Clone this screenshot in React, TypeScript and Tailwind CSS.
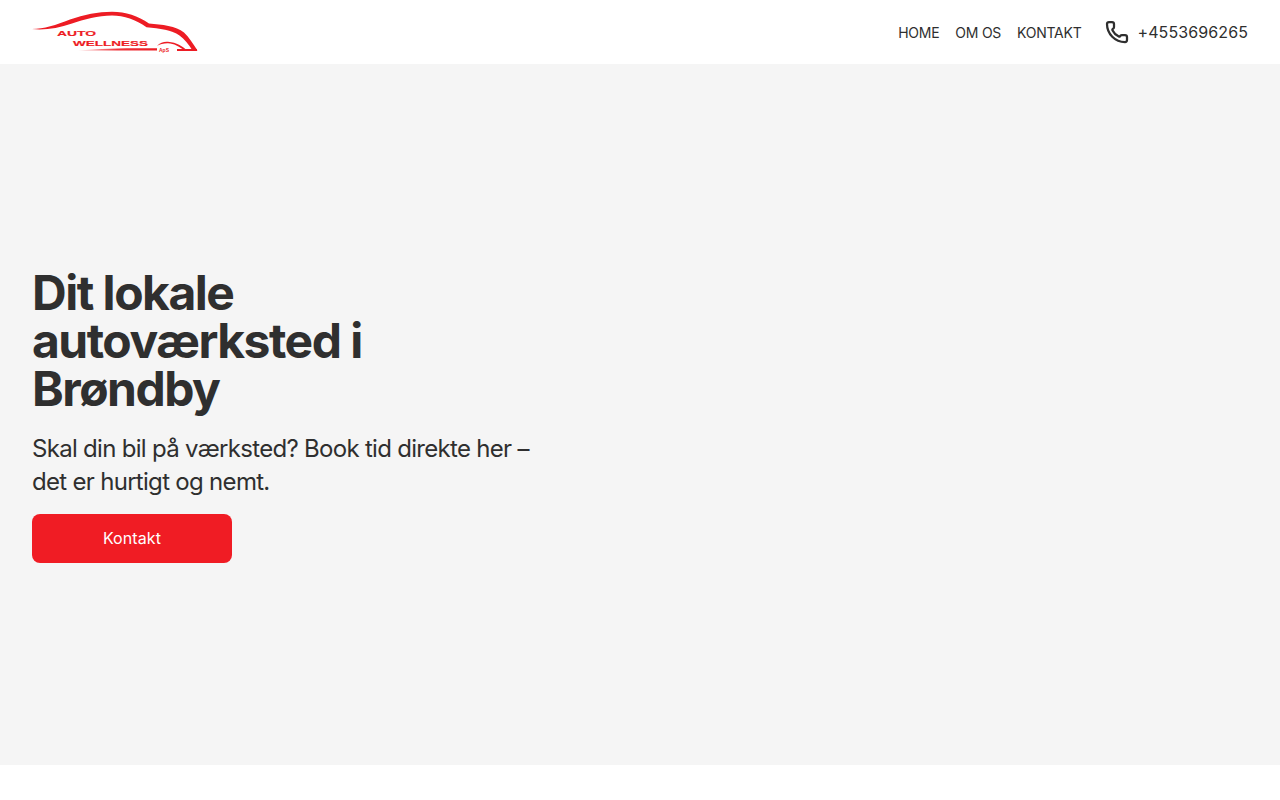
import { Phone } from "lucide-react"

const navItems = ["HOME", "OM OS", "KONTAKT"]

function Logo() {
  const red = "#ed1c24"
  const logoFont = "'Liberation Sans', sans-serif"
  return (
    <svg width="166" height="42" viewBox="0 0 166 42" className="block">
      <defs>
        <linearGradient id="underline" x1="0" x2="1" y1="0" y2="0">
          <stop offset="0" stopColor={red} stopOpacity="0.15" />
          <stop offset="0.5" stopColor={red} stopOpacity="0.9" />
          <stop offset="1" stopColor={red} />
        </linearGradient>
      </defs>
      {/* car outline */}
      <path
        d="M0 18C12 18 24 14 38 8.500C52 3.500 66 0.800 80 0.800C94 0.800 106 5 117 12.500C130 13.500 144 15 152 21.500C157 26 161 33 165.500 39.500L160.500 39.500C156.500 33.500 152.500 28 147.500 24.500C139.500 19 128 17.500 114.500 16.300C104 8.500 92 4.500 80 4.500C66 4.500 52 8.500 40 12.500C26 17.500 12 19.300 0 18Z"
        fill={red}
      />
      <path d="M46 39.500C70 37.500 100 37 125 37.300L125 39.500Z" fill="url(#underline)" />
      <path d="M125 35C128 31.500 132 30.500 136 30.800C145 31.500 150 35 155 39.500L152.500 39.500C147 35.500 142 32.500 136 32.300C132 32.200 128 33 125 35Z" fill={red} />
      <rect x="145" y="38" width="20" height="2" fill={red} />
      <text x="25" y="25" fontFamily={logoFont} fontSize="8" fontWeight="700" fill={red} stroke={red} strokeWidth="0.15" textLength="39" lengthAdjust="spacingAndGlyphs">AUTO</text>
      <text x="41" y="34.500" fontFamily={logoFont} fontSize="8" fontWeight="700" fill={red} stroke={red} strokeWidth="0.15" textLength="75" lengthAdjust="spacingAndGlyphs">WELLNESS</text>
      <text x="127" y="40.500" fontFamily={logoFont} fontSize="5" fontWeight="700" fill={red}>ApS</text>
    </svg>
  )
}

export default function App() {
  return (
    <div className="min-h-[800px] bg-white font-['Inter',sans-serif] text-[#2f2f2f]">
      {/* Header */}
      <header className="h-16 px-8 flex items-center justify-between bg-white">
        <Logo />
        <div className="flex items-center">
          <nav className="flex items-center gap-4 pt-px">
            {navItems.map((item) => (
              <a key={item} className="text-sm tracking-[-0.25px] text-[#2f2f2f]">
                {item}
              </a>
            ))}
          </nav>
          <div className="flex items-center gap-2 ml-6">
            <Phone size={24} strokeWidth={2.25} className="text-[#2f2f2f]" />
            <span className="text-base tracking-[0.1px]">+4553696265</span>
          </div>
        </div>
      </header>

      {/* Hero */}
      <section className="h-[701px] bg-[#f5f5f5] px-8 flex items-center">
        <div className="w-[508px] pt-[2px]">
          <h1 className="w-[400px] text-[48px] leading-[48px] font-bold tracking-[-1.5px] text-[#2f2f2f]">
            Dit lokale autoværksted i Brøndby
          </h1>
          <p className="mt-[19px] text-2xl leading-[33px] tracking-[-0.7px] text-[#2f2f2f]">
            Skal din bil på værksted? Book tid direkte her – det er hurtigt og nemt.
          </p>
          <button className="mt-4 w-[200px] h-[49px] rounded-lg bg-[#f01c24] text-white text-base font-normal tracking-[0.1px]">
            Kontakt
          </button>
        </div>
      </section>
    </div>
  )
}
